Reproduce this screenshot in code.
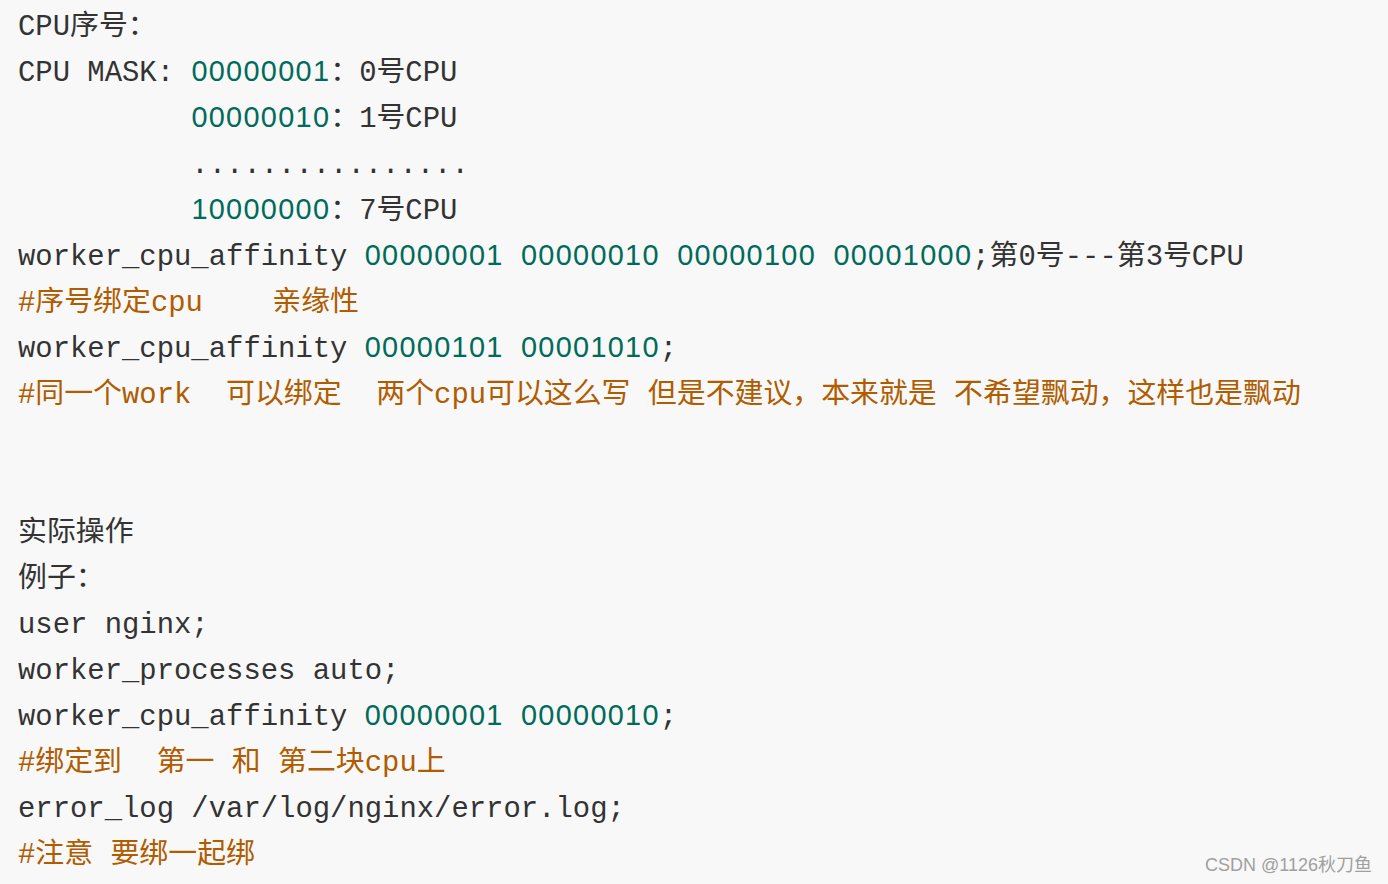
import React from "react";

type Seg = [string, "t" | "n" | "c"];

const lines: Seg[][] = [
  [["CPU序号：", "t"]],
  [["CPU MASK: ", "t"], ["00000001", "n"], ["：0号CPU", "t"]],
  [["          ", "t"], ["00000010", "n"], ["：1号CPU", "t"]],
  [["          ................", "t"]],
  [["          ", "t"], ["10000000", "n"], ["：7号CPU", "t"]],
  [
    ["worker_cpu_affinity ", "t"],
    ["00000001", "n"],
    [" ", "t"],
    ["00000010", "n"],
    [" ", "t"],
    ["00000100", "n"],
    [" ", "t"],
    ["00001000", "n"],
    [";第0号---第3号CPU", "t"],
  ],
  [["#序号绑定cpu    亲缘性", "c"]],
  [["worker_cpu_affinity ", "t"], ["00000101", "n"], [" ", "t"], ["00001010", "n"], [";", "t"]],
  [["#同一个work  可以绑定  两个cpu可以这么写 但是不建议，本来就是 不希望飘动，这样也是飘动", "c"]],
  [],
  [],
  [["实际操作", "t"]],
  [["例子：", "t"]],
  [["user nginx;", "t"]],
  [["worker_processes auto;", "t"]],
  [["worker_cpu_affinity ", "t"], ["00000001", "n"], [" ", "t"], ["00000010", "n"], [";", "t"]],
  [["#绑定到  第一 和 第二块cpu上", "c"]],
  [["error_log /var/log/nginx/error.log;", "t"]],
  [["#注意 要绑一起绑", "c"]],
];

// numbers use a plain (undotted) zero, spaced out to the mono cell width
const color = {
  t: "text-[#333333]",
  n: "text-[#006b5b] font-['Liberation_Sans',sans-serif] tracking-[1.29px] leading-none",
  c: "text-[#b05c00]",
};

export default function App() {
  return (
    <div className="relative h-[884px] w-full overflow-hidden bg-[#f8f8f8] pl-[18px] pt-[5px] font-['Liberation_Mono','Noto_Sans_CJK_SC',monospace] text-[28.9px]">
      {lines.map((line, i) => (
        <div key={i} className="h-[46px] whitespace-pre leading-[46px]">
          {line.map(([text, kind], j) => (
            <span key={j} className={color[kind]}>
              {text}
            </span>
          ))}
        </div>
      ))}
      <div className="absolute right-[16px] bottom-[5px] font-['Liberation_Sans','Noto_Sans_CJK_SC',sans-serif] text-[18px] text-[#a0a0a0]">
        CSDN @1126秋刀鱼
      </div>
    </div>
  );
}
